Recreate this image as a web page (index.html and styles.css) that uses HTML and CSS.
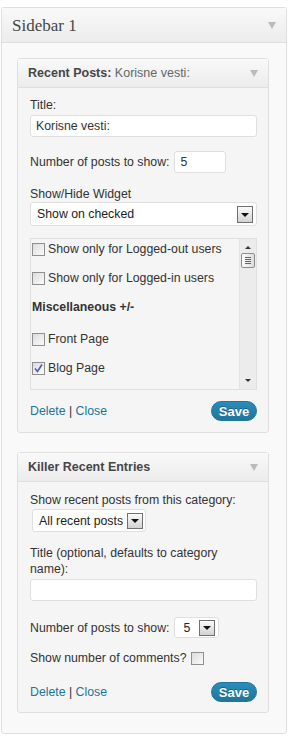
FILE: index.html
```html
<!DOCTYPE html>
<html lang="en">
<head>
  <meta charset="UTF-8">
  <title>Sidebar 1</title>
  <link rel="stylesheet" href="styles.css">
</head>
<body>

<div class="sidebar">
  <div class="sidebar-head">
    <h3>Sidebar 1</h3>
    <span class="toggle"></span>
  </div>

  <div class="sidebar-body">

    <!-- widget: recent posts -->
    <div class="widget">
      <div class="widget-head">
        <h4>Recent Posts: <span class="in-title">Korisne vesti:</span></h4>
        <span class="toggle"></span>
      </div>
      <div class="widget-body">
        <label class="lbl">Title:</label>
        <div class="text-input">Korisne vesti:</div>

        <div class="row row-num">
          <span>Number of posts to show:</span>
          <div class="text-input small">5</div>
        </div>

        <label class="lbl lbl-show">Show/Hide Widget</label>
        <div class="select wide">
          <span>Show on checked</span>
          <span class="arrow-box"></span>
        </div>

        <div class="scroll-box">
          <div class="scroll-list">
            <div class="check-row"><span class="check"></span>Show only for Logged-out users</div>
            <div class="check-row"><span class="check"></span>Show only for Logged-in users</div>
            <div class="check-row group">Miscellaneous +/-</div>
            <div class="check-row"><span class="check"></span>Front Page</div>
            <div class="check-row"><span class="check checked"><svg width="11" height="11" viewBox="0 0 11 11"><path d="M2 5.5 L4.5 8.5 L9 1.5" fill="none" stroke="#4a5ea8" stroke-width="1.6"/></svg></span>Blog Page</div>
          </div>
          <div class="scrollbar">
            <span class="sb-up"></span>
            <span class="sb-thumb"><i></i><i></i><i></i><i></i></span>
            <span class="sb-down"></span>
          </div>
        </div>

        <div class="widget-foot">
          <span><a href="#">Delete</a> | <a href="#">Close</a></span>
          <button class="btn-save">Save</button>
        </div>
      </div>
    </div>

    <!-- widget: killer recent entries -->
    <div class="widget">
      <div class="widget-head">
        <h4>Killer Recent Entries</h4>
        <span class="toggle"></span>
      </div>
      <div class="widget-body">
        <label class="lbl">Show recent posts from this category:</label>
        <div class="select cat">
          <span>All recent posts</span>
          <span class="arrow-box"></span>
        </div>

        <label class="lbl lbl-title2">Title (optional, defaults to category name):</label>
        <div class="text-input"></div>

        <div class="row row-num2">
          <span>Number of posts to show:</span>
          <div class="select num">
            <span>5</span>
            <span class="arrow-box"></span>
          </div>
        </div>

        <div class="row row-comments">
          <span>Show number of comments?</span>
          <span class="check"></span>
        </div>

        <div class="widget-foot foot2">
          <span><a href="#">Delete</a> | <a href="#">Close</a></span>
          <button class="btn-save">Save</button>
        </div>
      </div>
    </div>

  </div>
</div>

</body>
</html>
```

FILE: styles.css
```css
body {
  margin: 0;
  background: #fff;
  font-family: "Liberation Sans", Arial, sans-serif;
  font-size: 12.3px;
  line-height: 16px;
  color: #333;
}

.sidebar {
  width: 286px;
  box-sizing: border-box;
  margin: 7px 0 0 1px;
  border: 1px solid #dfdfdf;
  border-radius: 3px;
  background: #f9f9f9;
}
.sidebar-head {
  display: flex;
  align-items: center;
  justify-content: space-between;
  height: 34px;
  padding: 0 10px 0 10px;
  border-bottom: 1px solid #dfdfdf;
  background: linear-gradient(#f9f9f9, #ececec);
}
.sidebar-head h3 {
  margin: 0;
  font-family: "Liberation Serif", Georgia, serif;
  font-weight: normal;
  font-size: 17px;
  color: #464646;
  padding-top: 2px;
}
.toggle {
  width: 0;
  height: 0;
  border-left: 4px solid transparent;
  border-right: 4px solid transparent;
  border-top: 7px solid #bbb;
}
.sidebar-body {
  padding: 15px 17px 20px 15px;
}

.widget {
  border: 1px solid #dfdfdf;
  border-radius: 3px;
  background: #f5f5f5;
  margin-bottom: 19px;
}
.widget:last-child { margin-bottom: 0; }
.widget-head {
  display: flex;
  align-items: center;
  justify-content: space-between;
  height: 28px;
  padding: 0 10px 0 10px;
  border-bottom: 1px solid #dfdfdf;
  background: linear-gradient(#f9f9f9, #ececec);
}
.widget-head h4 {
  margin: 0;
  font-size: 12.5px;
  font-weight: bold;
  color: #464646;
}
.widget-head .in-title {
  font-weight: normal;
  color: #666;
}
.widget-body {
  padding: 9px 11px 11px 12px;
}

.lbl { display: block; }
.text-input {
  box-sizing: border-box;
  height: 22px;
  margin-top: 2px;
  padding: 2px 5px;
  background: #fff;
  border: 1px solid #dfdfdf;
  border-radius: 3px;
  color: #333;
}
.text-input.small {
  width: 52px;
  margin: 0 0 0 5px;
}

.row {
  display: flex;
  align-items: center;
}
.row-num { margin-top: 14px; height: 22px; }
.lbl-show { margin-top: 13px; }

.select {
  box-sizing: border-box;
  display: flex;
  align-items: center;
  justify-content: space-between;
  background: #fff;
  border: 1px solid #dfdfdf;
  border-radius: 3px;
  padding: 0 3px 0 6px;
  color: #222;
  white-space: nowrap;
}
.select.wide { height: 24px; }
.select.cat {
  width: 114px;
  height: 23px;
  margin: 1px 0 0 2px;
  padding-right: 2px;
}
.select.num {
  width: 45px;
  height: 21px;
  margin-left: 5px;
  padding-left: 8px;
}
.arrow-box {
  box-sizing: border-box;
  width: 16px;
  height: 17px;
  border: 1px solid #707070;
  background: linear-gradient(#fafafa, #d2d2d2);
  display: flex;
  align-items: center;
  justify-content: center;
}
.arrow-box::after {
  content: "";
  border-left: 4px solid transparent;
  border-right: 4px solid transparent;
  border-top: 4px solid #111;
  margin-top: 1px;
}
.select.cat .arrow-box, .select.num .arrow-box { height: 16px; }

.scroll-box {
  display: flex;
  height: 152px;
  box-sizing: border-box;
  margin-top: 12px;
  border: 1px solid #dfdfdf;
  background: #f5f5f5;
  overflow: hidden;
}
.scroll-list {
  flex: 1;
  padding: 0 0 0 1px;
}
.check-row {
  display: flex;
  align-items: center;
  height: 20px;
  margin-bottom: 9px;
}
.check-row.group {
  font-weight: bold;
  margin-top: 2px;
  margin-bottom: 12px;
}
.check {
  box-sizing: border-box;
  width: 13px;
  height: 13px;
  margin-right: 3px;
  border: 1px solid #8f8f8f;
  background: linear-gradient(135deg, #dcdcdc, #fbfbfb);
  display: flex;
  align-items: center;
  justify-content: center;
}
.check svg { display: block; }

.scrollbar {
  width: 16px;
  border-left: 1px solid #e4e4e4;
  background: #ececec;
  display: flex;
  flex-direction: column;
  align-items: center;
}
.sb-up, .sb-down {
  width: 0;
  height: 0;
  border-left: 3px solid transparent;
  border-right: 3px solid transparent;
}
.sb-up {
  border-bottom: 3px solid #333;
  margin-top: 7px;
}
.sb-down {
  border-top: 3px solid #333;
  margin-top: auto;
  margin-bottom: 7px;
}
.sb-thumb {
  box-sizing: border-box;
  width: 14px;
  height: 15px;
  margin-top: 4px;
  border: 1px solid #8c8c8c;
  border-radius: 2px;
  background: linear-gradient(90deg, #fafafa, #dedede);
  display: flex;
  flex-direction: column;
  justify-content: center;
  align-items: center;
  gap: 1px;
}
.sb-thumb i {
  display: block;
  width: 6px;
  height: 1px;
  background: #666;
}

.widget-foot {
  display: flex;
  align-items: center;
  justify-content: space-between;
  margin-top: 11px;
  height: 20px;
}
.widget-foot a {
  color: #21759b;
  text-decoration: none;
}
.btn-save {
  width: 46px;
  height: 20px;
  padding: 0;
  border: 1px solid #21759b;
  border-radius: 11px;
  background: linear-gradient(#2a8cbb, #21759b);
  color: #fff;
  font-family: "Liberation Sans", Arial, sans-serif;
  font-size: 13px;
  font-weight: bold;
  text-shadow: 0 -1px 0 rgba(0,0,0,0.3);
}

.lbl-title2 { margin-top: 13px; }
.row-num2 { margin-top: 16px; height: 21px; }
.row-comments { margin-top: 12px; }
.row-comments .check { margin-left: 4px; }
.foot2 { margin-top: 16px; }
.widget:last-child .widget-body { padding-bottom: 10px; padding-top: 10px; }
```
